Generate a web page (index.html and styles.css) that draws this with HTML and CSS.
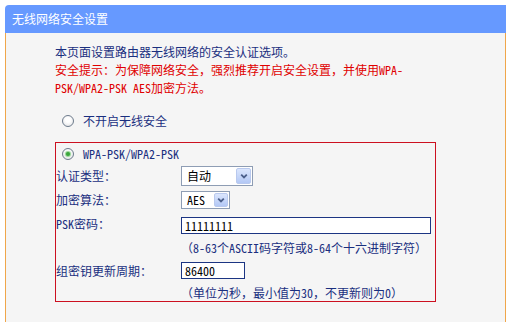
FILE: index.html
```html
<!DOCTYPE html>
<html lang="zh-CN">
<head>
<meta charset="utf-8">
<title>无线网络安全设置</title>
<link rel="stylesheet" href="styles.css">
</head>
<body>
<div class="page">
  <div class="header">无线网络安全设置</div>
  <div class="panel">
    <div class="intro">
      <p>本页面设置路由器无线网络的安全认证选项。</p>
      <p class="warn">安全提示：为保障网络安全，强烈推荐开启安全设置，并使用WPA-<br>PSK/WPA2-PSK AES加密方法。</p>
    </div>
    <div class="radio-row off">
      <span class="radio"></span><span>不开启无线安全</span>
    </div>
    <div class="box">
      <div class="radio-row wpa">
        <span class="radio checked"></span><span>WPA-PSK/WPA2-PSK</span>
      </div>
      <div class="field r-auth">
        <span class="lbl">认证类型：</span>
        <div class="select sel-auth">
          <span class="sel-text">自动</span>
          <span class="sel-btn"><svg viewBox="0 0 10 10"><path d="M2.2 3.6 L5 6.4 L7.8 3.6"/></svg></span>
        </div>
      </div>
      <div class="field r-enc">
        <span class="lbl">加密算法：</span>
        <div class="select sel-enc">
          <span class="sel-text">AES</span>
          <span class="sel-btn"><svg viewBox="0 0 10 10"><path d="M2.2 3.6 L5 6.4 L7.8 3.6"/></svg></span>
        </div>
      </div>
      <div class="field r-psk">
        <span class="lbl">PSK密码：</span>
        <div class="input in-psk">11111111</div>
      </div>
      <div class="hint h1">（8-63个ASCII码字符或8-64个十六进制字符）</div>
      <div class="field r-group">
        <span class="lbl">组密钥更新周期：</span>
        <div class="input in-group">86400</div>
      </div>
      <div class="hint h2">（单位为秒，最小值为30，不更新则为0）</div>
    </div>
  </div>
</div>
</body>
</html>
```

FILE: styles.css
```css
* { box-sizing: border-box; margin: 0; padding: 0; }
body {
  margin: 0;
  background: #fff;
  font-family: "Noto Sans Mono CJK SC", "Noto Sans CJK SC", sans-serif;
  font-size: 12px;
  line-height: 18px;
  color: #1a2f7f;
}
.page { padding: 5px 6px 0 5px; }
.header {
  height: 28px;
  background: #6699ff;
  color: #fff;
  border-radius: 4px 0 0 0;
  padding-left: 7px;
  line-height: 28px;
}
.panel {
  height: 289px;
  background: #f5f5f5;
  border-left: 1px solid #f0a64a;
  border-right: 1px solid #f0a64a;
  padding: 10px 0 0 49px;
}
.intro p { white-space: nowrap; }
.intro .warn { color: #e00000; }
.radio-row {
  display: flex;
  align-items: center;
}
.radio-row.off { margin-top: 13px; height: 21px; padding-left: 7px; }
.radio-row.wpa { height: 21px; padding-left: 6px; }
.radio {
  width: 12px;
  height: 12px;
  border-radius: 50%;
  border: 1px solid #6d7b8c;
  background: radial-gradient(circle at 50% 40%, #fff 30%, #dcdde0 100%);
  margin-right: 9px;
  display: flex;
  align-items: center;
  justify-content: center;
}
.radio.checked::after {
  content: "";
  width: 4px;
  height: 4px;
  border-radius: 50%;
  background: #3aa53c;
  box-shadow: 0 0 1px 1px #8fd28f;
}
.box {
  margin-top: 11px;
  width: 381px;
  border: 1px solid #cc1020;
}
.field { display: flex; align-items: center; }
.lbl { width: 125px; flex: none; white-space: nowrap; }
.r-auth { height: 24px; }
.r-enc { height: 24px; }
.r-psk { height: 23px; }
.r-group { height: 21px; }
.hint { padding-left: 125px; white-space: nowrap; }
.h1 { height: 25px; padding-top: 4px; }
.h2 { height: 20px; padding-top: 3px; }
.select {
  display: flex;
  align-items: center;
  justify-content: space-between;
  background: #fff;
  border: 1px solid #8e9db4;
  padding: 0 1px 0 5px;
  color: #000;
}
.sel-auth { width: 72px; height: 20px; }
.sel-enc { width: 49px; height: 18px; }
.sel-btn {
  display: flex;
  align-items: center;
  justify-content: center;
  background: linear-gradient(#dbe6fd, #b3c8f5);
  border: 1px solid #b9c9ee;
  border-radius: 2px;
}
.sel-auth .sel-btn { width: 15px; height: 16px; }
.sel-enc .sel-btn { width: 14px; height: 14px; }
.sel-btn svg { width: 10px; height: 10px; }
.sel-btn path { fill: none; stroke: #4b5f8a; stroke-width: 1.8; }
.input {
  background: #fff;
  border: 1px solid #1c3583;
  height: 17px;
  line-height: 15px;
  padding-left: 3px;
  color: #000;
}
.in-psk { width: 250px; margin-top: 3px; }
.in-group { width: 64px; }
```
